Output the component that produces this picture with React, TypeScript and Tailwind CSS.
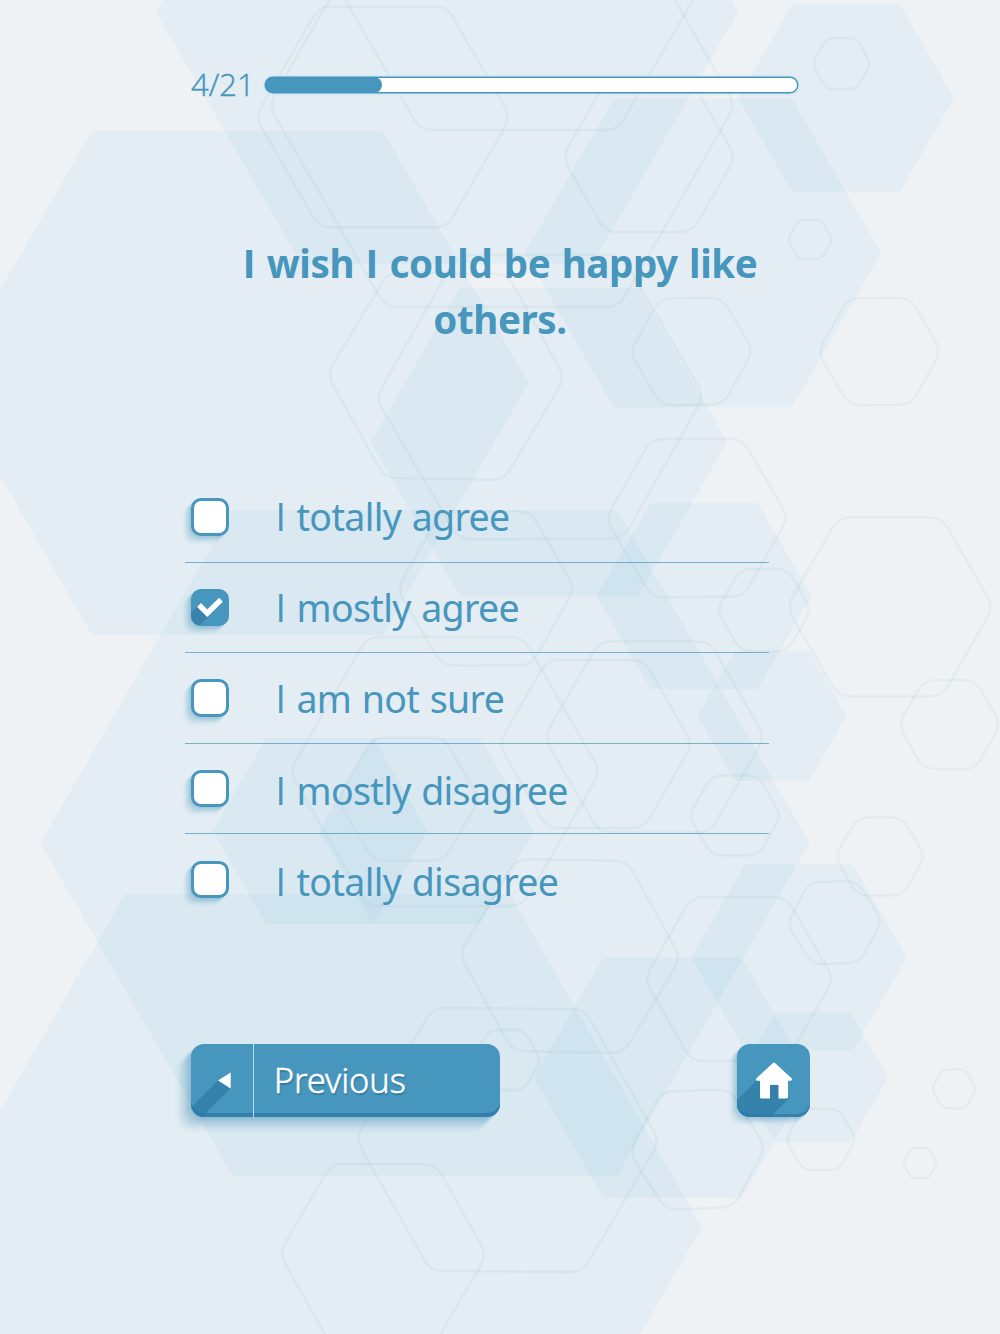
import React, { useState } from 'react';

type Hex = { cx: number; cy: number; h: number; rot?: number };

const FILLED: Hex[] = [
  { cx: 447, cy: 12, h: 252 },
  { cx: 237.5, cy: 383, h: 252 },
  { cx: 846, cy: 98, h: 93.5 },
  { cx: 703, cy: 253, h: 154.3 },
  { cx: 549, cy: 442, h: 154.3 },
  { cx: 425, cy: 843, h: 333 },
  { cx: 704, cy: 596, h: 93 },
  { cx: 772, cy: 716, h: 64.5 },
  { cx: 320, cy: 831, h: 93 },
  { cx: 426.5, cy: 831, h: 93 },
  { cx: 317.5, cy: 1227, h: 333 },
  { cx: 672.5, cy: 1077.5, h: 120 },
  { cx: 799, cy: 957.5, h: 93.3 },
  { cx: 813, cy: 1077.5, h: 65 },
];

const OUTLINED: Hex[] = [
  { cx: 383, cy: 117, h: 110.5 },
  { cx: 502, cy: 105, h: 202 },
  { cx: 519, cy: -41, h: 171 },
  { cx: 649, cy: 157, h: 75 },
  { cx: 841.5, cy: 63.5, h: 25.5 },
  { cx: 810, cy: 239.5, h: 19.5 },
  { cx: 691.5, cy: 351.5, h: 53.5, rot: -1 },
  { cx: 879.5, cy: 351.5, h: 53.5, rot: -0.5 },
  { cx: 446, cy: 376, h: 103, rot: 1 },
  { cx: 540, cy: 397, h: 142, rot: -0.4 },
  { cx: 697, cy: 518, h: 79, rot: -0.5 },
  { cx: 486, cy: 588.5, h: 77, rot: -0.4 },
  { cx: 764, cy: 610, h: 41 },
  { cx: 890, cy: 607, h: 89.5 },
  { cx: 949.5, cy: 724.5, h: 44.5, rot: 0.7 },
  { cx: 445, cy: 771.5, h: 134.5 },
  { cx: 595.5, cy: 744, h: 84 },
  { cx: 654.5, cy: 737, h: 95.5 },
  { cx: 408.5, cy: 799, h: 61.5 },
  { cx: 735, cy: 815.5, h: 40 },
  { cx: 880, cy: 856.5, h: 39 },
  { cx: 834.5, cy: 922.5, h: 41, rot: -2 },
  { cx: 570, cy: 956, h: 96, rot: 1 },
  { cx: 739, cy: 979, h: 82 },
  { cx: 507.5, cy: 1140, h: 131.5, rot: 0.5 },
  { cx: 506.5, cy: 1060, h: 30 },
  { cx: 697.5, cy: 1149.5, h: 59, rot: -2 },
  { cx: 383, cy: 1254, h: 90, rot: 0.5 },
  { cx: 821, cy: 1139.5, h: 30.5 },
  { cx: 954, cy: 1089, h: 19.5 },
  { cx: 920, cy: 1163, h: 15 },
];

const OPTIONS = [
  'totally agree',
  'mostly agree',
  'am not sure',
  'mostly disagree',
  'totally disagree',
];

/**
 * Path of a flat-topped hexagon, corners are rounded when cut > 0
 */
const hexPath = ({ cx, cy, h, rot = 0 }: Hex, cut = 0) => {
  const r = h / 0.866;
  const pts = [0, 1, 2, 3, 4, 5].map((i) => {
    const a = ((i * 60 + rot) * Math.PI) / 180;
    return [cx + r * Math.cos(a), cy + r * Math.sin(a)];
  });
  if (!cut) return `M${pts.map((p) => p.join(' ')).join('L')}Z`;

  const t = cut / r;
  const mix = (a: number[], b: number[]) => `${a[0] + (b[0] - a[0]) * t} ${a[1] + (b[1] - a[1]) * t}`;
  return (
    pts
      .map((p, i) => {
        const prev = pts[(i + 5) % 6];
        const next = pts[(i + 1) % 6];
        return `${i ? 'L' : 'M'}${mix(p, prev)}Q${p[0]} ${p[1]} ${mix(p, next)}`;
      })
      .join('') + 'Z'
  );
};

// Stacked shadows going down and to the left, fading out with the distance
const longShadow = (length: number, alpha: number) =>
  Array.from({ length }, (_, i) => {
    const a = alpha * (1 - i / length);
    return `${-(i + 1)}px ${i + 1}px ${1 + i * 0.25}px rgba(71,150,189,${a.toFixed(3)})`;
  }).join(', ');

const Background: React.FC = () => (
  <svg className="absolute inset-0" width="1000" height="1334" viewBox="0 0 1000 1334" aria-hidden="true">
    {FILLED.map((hex, i) => (
      <path key={i} d={hexPath(hex)} fill="rgb(142,201,229)" fillOpacity="0.1" />
    ))}
    {OUTLINED.map((hex, i) => (
      <path
        key={i}
        d={hexPath(hex, Math.min(12, hex.h * 0.27))}
        fill="none"
        stroke="rgb(120,165,180)"
        strokeOpacity="0.09"
        strokeWidth="2.4"
      />
    ))}
  </svg>
);

// Sans "I" without the crossbars
const I: React.FC = () => <span className="font-['Open_Sans',sans-serif] tracking-normal">I</span>;

const Checkbox: React.FC<{ checked: boolean }> = ({ checked }) =>
  checked ? (
    <span
      className="block w-[38px] h-[37.5px] shrink-0 rounded-[10px] overflow-hidden bg-[#4796bd]"
      style={{ boxShadow: longShadow(9, 0.1) }}
    >
      <svg className="block" width="38" height="38" viewBox="0 0 38 38">
        <path d="M6.3 17.5L-6 29.8V44H1L17.5 27.5Z" fill="#3982ad" />
        <path d="M8 16L16.2 24.2L30 10.8" fill="none" stroke="#fff" strokeWidth="5.4" />
      </svg>
    </span>
  ) : (
    <span
      className="block w-[38px] h-[37.5px] shrink-0 rounded-[10px] border-[3px] border-[#4796bd] bg-white"
      style={{ boxShadow: longShadow(9, 0.1) }}
    />
  );

const App: React.FC = () => {
  const [selected, setSelected] = useState(1);
  const current = 4;
  const total = 21;

  return (
    <div className="relative w-[1000px] h-[1334px] overflow-hidden bg-[#eef2f5] font-['Noto_Sans',sans-serif] text-[#4796bd]">
      <Background />

      <div className="relative flex h-full flex-col">
        <header className="mt-[65px] ml-[191px] flex h-10 w-[606.5px] items-center">
          <span className="w-[73.5px] shrink-0 pb-0.5 whitespace-nowrap font-['Open_Sans',sans-serif] text-[31px] leading-10 font-light [-webkit-text-stroke:0.45px_#4796bd]">
            {current}/{total}
          </span>
          <div className="h-4 flex-1 rounded-full border border-[#4796bd] bg-white shadow-[0_0_0_0.5px_#4796bd,0_0_2px_1px_rgba(190,228,245,0.8)]">
            <div className="-ml-px -mt-px h-4 w-[117px] rounded-full bg-[#4796bd]" />
          </div>
        </header>

        <h1 className="mt-[129.5px] h-28 text-center text-[38.5px] leading-[56px] font-bold tracking-[-0.4px] [word-spacing:1.8px]">
          <I /> wish <I /> could be happy like
          <br />
          others.
        </h1>

        <ul className="mt-[125.5px] ml-[184.5px] w-[584.5px]">
          {OPTIONS.map((option, i) => (
            <li
              key={option}
              className="flex h-[90.6px] items-center border-b border-[#4796bd]/70 pl-[6.5px] last:border-b-0"
              onClick={() => setSelected(i)}
            >
              <Checkbox checked={selected === i} />
              <span
                className="ml-[46.5px] text-[37.5px] leading-[52px] tracking-[-0.65px] whitespace-nowrap [word-spacing:1.4px]"
                style={{ paddingTop: i + 1 }}
              >
                <I /> {option}
              </span>
            </li>
          ))}
        </ul>

        <footer className="mt-[119.5px] ml-[191px] flex w-[619px] justify-between">
          <button
            className="flex h-[72.5px] w-[309px] overflow-hidden rounded-[13px] bg-[#4796bd] text-left text-white"
            style={{ boxShadow: `inset 0 -4px 0 #3580ab, ${longShadow(17, 0.07)}` }}
          >
            <svg className="block shrink-0" width="62" height="73" viewBox="0 0 62 73">
              <path d="M27 36.5L-9 72.5V82H2L39.5 44.5Z" fill="#2f7ba7" fillOpacity="0.75" />
              <path d="M27 36.5L39.7 28.4V44.6Z" fill="#fff" />
            </svg>
            <span className="h-full w-[1.3px] shrink-0 bg-[#b4dcef]" />
            <span className="ml-[19.5px] mt-[10.5px] text-[34.5px] leading-[50px] font-light tracking-[-0.1px] [-webkit-text-stroke:0.5px_#fff] [text-shadow:1px_2px_1px_rgba(30,90,130,0.5)]">
              Previous
            </span>
          </button>

          <button
            aria-label="Home"
            className="h-[72.5px] w-[73.5px] overflow-hidden rounded-[13px] bg-[#4796bd]"
            style={{ boxShadow: `inset 0 -3px 0 #3580ab, ${longShadow(9, 0.1)}` }}
          >
            <svg className="block" width="74" height="73" viewBox="0 0 74 73">
              <path d="M19 37L-4 60V82H24L52 54.5L42 40Z" fill="#2f7ba7" fillOpacity="0.75" />
              <path
                d="M37 20L53.5 35.3H49.5V53H42V41H33V53H24.5V35.3H20.5Z"
                fill="#fff"
                stroke="#fff"
                strokeWidth="3"
                strokeLinejoin="round"
              />
              <path d="M33 41H41.5V55H33Z" fill="#3580ab" />
            </svg>
          </button>
        </footer>
      </div>
    </div>
  );
};

export default App;
